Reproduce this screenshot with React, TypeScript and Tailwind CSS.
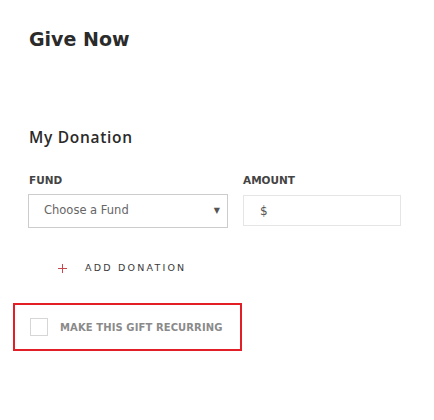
import React from "react";

export default function App() {
  const font = { fontFamily: '"DejaVu Sans", "Open Sans", sans-serif' };
  return (
    <div className="w-[434px] h-[420px] bg-white text-[#333]" style={font}>
      <div className="pl-[29px] pt-[27px]">
        <h1 className="text-[19px] leading-[24px] font-bold text-[#2b2b2b] m-0">Give Now</h1>
      </div>
      <div className="pl-[29px] pt-[76px]">
        <h2
          className="text-[15.5px] leading-[20px] font-semibold text-[#2a2a2a] tracking-[0.7px]"
          style={{ fontFamily: '"Open Sans", "DejaVu Sans", sans-serif' }}
        >
          My Donation
        </h2>
      </div>
      <div className="flex pl-[28px] pt-[26px] gap-[15px]">
        <div className="flex flex-col w-[200px]">
          <div className="text-[10.5px] leading-[14px] font-semibold text-[#444] pl-[1px]">FUND</div>
          <div className="mt-[7px] h-[34px] border border-[#cccccc] flex items-center justify-between pl-[15px] pr-[7px]">
            <span className="text-[11.5px] text-[#666]">Choose a Fund</span>
            <span className="text-[8px] text-[#555]">▼</span>
          </div>
        </div>
        <div className="flex flex-col w-[158px]">
          <div className="text-[10.5px] leading-[14px] font-semibold text-[#444]">AMOUNT</div>
          <div className="mt-[8px] h-[31px] border border-[#e5e5e5] flex items-center pl-[16px]">
            <span className="text-[12px] text-[#555]">$</span>
          </div>
        </div>
      </div>
      <div className="flex items-center pl-[58px] pt-[33px] h-[14px] box-content">
        <svg width="9" height="9" viewBox="0 0 9 9" className="mr-[18px]">
          <path d="M4.5 0V9M0 4.5H9" stroke="#c8484e" strokeWidth="1" />
        </svg>
        <span className="text-[9.5px] leading-[14px] tracking-[2.2px] text-[#3a3a3a]">ADD DONATION</span>
      </div>
      <div className="ml-[13px] mt-[28px] w-[229px] h-[48px] border-[2px] border-[#e21f26] flex items-center pl-[15px]">
        <div className="w-[18px] h-[18px] border border-[#d6d6d6] bg-white"></div>
        <span className="ml-[12px] text-[10px] font-semibold tracking-[0.1px] text-[#8a8a8a]">MAKE THIS GIFT RECURRING</span>
      </div>
    </div>
  );
}
